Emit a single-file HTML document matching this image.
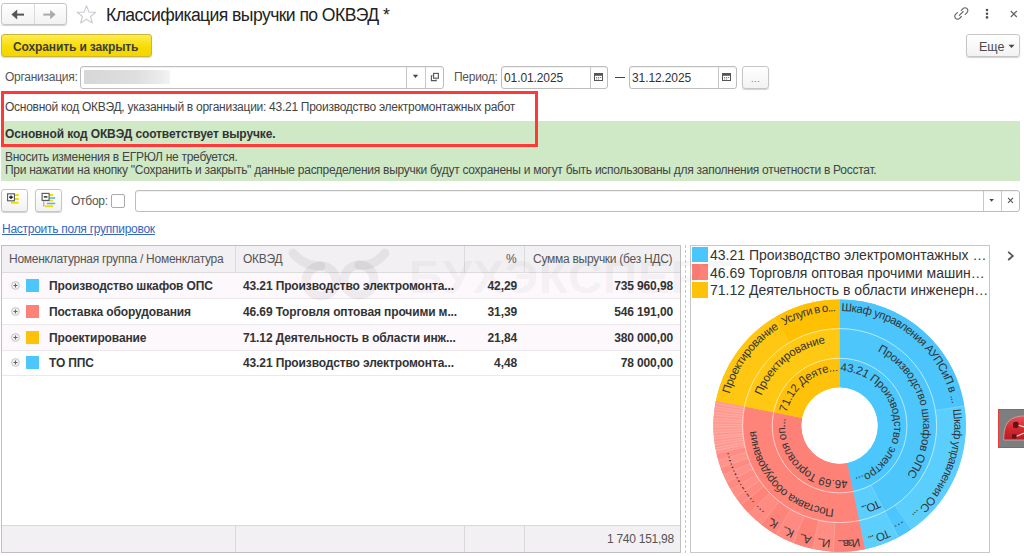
<!DOCTYPE html>
<html><head><meta charset="utf-8">
<style>
html,body{margin:0;padding:0;background:#fff;}
body{width:1024px;height:556px;overflow:hidden;position:relative;font-family:"Liberation Sans",sans-serif;font-size:12px;letter-spacing:-0.27px;color:#333;}
.a{position:absolute;white-space:nowrap;}
.t{position:absolute;white-space:nowrap;line-height:14px;height:14px;}
.btn{position:absolute;box-sizing:border-box;border:1px solid #c6c6c6;border-radius:3px;background:linear-gradient(#ffffff,#f2f2f2);box-shadow:0 1px 1px rgba(0,0,0,0.18);}
.inp{position:absolute;box-sizing:border-box;border:1px solid #bdbdbd;border-radius:3px;background:#fff;box-shadow:inset 0 1px 1px rgba(0,0,0,0.06);}
.vd{position:absolute;top:0;bottom:0;width:1px;background:#c8c8c8;}
.b{font-weight:bold;letter-spacing:-0.12px;}
.hd{color:#555;}
.cell{position:absolute;white-space:nowrap;line-height:14px;}
</style></head><body>

<!-- nav buttons -->
<div class="btn" style="left:1px;top:3px;width:66px;height:22px;">
  <div class="vd" style="left:32px;background:#dadada"></div>
</div>
<svg class="a" style="left:0;top:0" width="70" height="28">
  <path d="M11.4,14.6 L17.2,9.6 L17.2,19.6 Z" fill="#555"/>
  <rect x="16.5" y="13.6" width="7.5" height="2" fill="#555"/>
  <path d="M55.6,14.6 L50.2,10 L50.2,19.2 Z" fill="#aaa"/>
  <rect x="43.3" y="13.6" width="7.5" height="2" fill="#aaa"/>
</svg>
<!-- star -->
<svg class="a" style="left:76px;top:5px" width="21" height="19">
  <path d="M10.5,0.8 L13,7.1 L19.8,7.3 L14.5,11.5 L16.4,18 L10.5,14.2 L4.6,18 L6.5,11.5 L1.2,7.3 L8,7.1 Z" fill="none" stroke="#c9cdd2" stroke-width="1.1" stroke-linejoin="round"/>
</svg>
<div class="t" style="left:106px;top:5px;font-size:17.6px;letter-spacing:-0.58px;line-height:20px;height:20px;color:#222;">Классификация выручки по ОКВЭД *</div>

<!-- right header icons -->
<svg class="a" style="left:953px;top:6px" width="16" height="16">
  <g fill="none" stroke="#666" stroke-width="1.35" stroke-linecap="round" transform="translate(1.2,0.8) scale(0.86)">
    <path d="M8.2,4.2 L10.3,2.1 C11.6,0.8 13.6,0.8 14.9,2.1 C16.2,3.4 16.2,5.4 14.9,6.7 L12.8,8.8"/>
    <path d="M8.3,11.3 L6.2,13.4 C4.9,14.7 2.9,14.7 1.6,13.4 C0.3,12.1 0.3,10.1 1.6,8.8 L3.7,6.7"/>
    <path d="M6,10 L10.5,5.5"/>
  </g>
</svg>
<svg class="a" style="left:984px;top:8px" width="6" height="12">
  <circle cx="3" cy="2" r="1.3" fill="#555"/><circle cx="3" cy="5.7" r="1.3" fill="#555"/><circle cx="3" cy="9.4" r="1.3" fill="#555"/>
</svg>
<svg class="a" style="left:1009px;top:10px" width="9" height="9">
  <path d="M1.8,1 L7.8,7 M7.8,1 L1.8,7" stroke="#666" stroke-width="1.2"/>
</svg>

<!-- save button -->
<div class="a" style="left:1px;top:34px;width:151px;height:23px;box-sizing:border-box;border:1px solid #cdb43a;border-radius:3px;background:linear-gradient(#ffec50,#f8db00 60%,#f3d500);box-shadow:0 1px 1px rgba(0,0,0,0.15);"></div>
<div class="t b" style="left:13px;top:40px;color:#3d3d3d;">Сохранить и закрыть</div>

<!-- Еще -->
<div class="btn" style="left:966px;top:34px;width:54px;height:23px;"></div>
<div class="t" style="left:979px;top:39.5px;color:#4a4a4a;font-size:12.5px;letter-spacing:0;">Еще</div>
<svg class="a" style="left:1008px;top:44px" width="7" height="5"><path d="M0.5,0.8 H6.5 L3.5,4 Z" fill="#444"/></svg>

<!-- org row -->
<div class="t" style="left:5px;top:70px;color:#555;">Организация:</div>
<div class="inp" style="left:80px;top:66px;width:364px;height:23px;">
  <div class="vd" style="left:325px;"></div>
  <div class="vd" style="left:344px;"></div>
</div>
<div class="a" style="left:84px;top:70px;width:86px;height:14px;background:linear-gradient(90deg,#d7d7d7,#dedede 60%,#ececec 90%,#f4f4f4);"></div>
<svg class="a" style="left:412px;top:74px" width="7" height="5"><path d="M0.8,0.8 H6.2 L3.5,4 Z" fill="#444"/></svg>
<svg class="a" style="left:430px;top:72px" width="10" height="10">
  <rect x="3.6" y="1.4" width="4.8" height="4.8" fill="none" stroke="#555" stroke-width="1.1"/>
  <path d="M2.6,3.8 H1.4 V8.6 H6.2 V7.4" fill="none" stroke="#555" stroke-width="1.1"/>
</svg>
<div class="t" style="left:454px;top:70px;color:#555;">Период:</div>
<div class="inp" style="left:501px;top:66px;width:107px;height:23px;"><div class="vd" style="left:88px;"></div></div>
<div class="t" style="left:504px;top:71px;color:#333;letter-spacing:-0.1px;">01.01.2025</div>
<svg class="a" style="left:594px;top:72px" width="9" height="9"><rect x="0.5" y="1.5" width="8" height="7" fill="none" stroke="#555" stroke-width="1"/><rect x="0.5" y="1.5" width="8" height="2.3" fill="#555"/><path d="M2,5.5h1.2M4,5.5h1.2M6,5.5h1.2M2,7h1.2M4,7h1.2" stroke="#777" stroke-width="0.9"/></svg>
<div class="a" style="left:615px;top:77px;width:10px;height:1px;background:#444;"></div>
<div class="inp" style="left:629px;top:66px;width:108px;height:23px;"><div class="vd" style="left:88px;"></div></div>
<div class="t" style="left:632px;top:71px;color:#333;letter-spacing:-0.1px;">31.12.2025</div>
<svg class="a" style="left:722px;top:72px" width="9" height="9"><rect x="0.5" y="1.5" width="8" height="7" fill="none" stroke="#555" stroke-width="1"/><rect x="0.5" y="1.5" width="8" height="2.3" fill="#555"/><path d="M2,5.5h1.2M4,5.5h1.2M6,5.5h1.2M2,7h1.2M4,7h1.2" stroke="#777" stroke-width="0.9"/></svg>
<div class="btn" style="left:742px;top:66px;width:27px;height:23px;"></div>
<div class="t" style="left:751px;top:72px;color:#666;font-size:9px;letter-spacing:0.6px;">...</div>

<!-- green info -->
<div class="a" style="left:1px;top:121px;width:1019px;height:60px;background:#cfe8c6;"></div>
<div class="a" style="left:2px;top:94px;width:534px;height:27px;background:#fff;"></div>
<div class="a" style="left:0.5px;top:91px;width:537.5px;height:56px;box-sizing:border-box;border:3px solid #ff3838;"></div>
<div class="t" style="left:5px;top:100px;color:#444;">Основной код ОКВЭД, указанный в организации: 43.21 Производство электромонтажных работ</div>
<div class="t b" style="left:5px;top:127px;color:#333;">Основной код ОКВЭД соответствует выручке.</div>
<div class="t" style="left:5px;top:150px;color:#444;">Вносить изменения в ЕГРЮЛ не требуется.</div>
<div class="t" style="left:5px;top:163px;color:#444;">При нажатии на кнопку "Сохранить и закрыть" данные распределения выручки будут сохранены и могут быть использованы для заполнения отчетности в Росстат.</div>

<!-- toolbar -->
<div class="btn" style="left:1px;top:189px;width:27px;height:23px;"></div>
<svg class="a" style="left:0;top:185px" width="64" height="30">
  <path d="M15,10 H18.8 M15,14 H18.8 M11,17.8 H18.8" stroke="#f0e000" stroke-width="2.1"/>
  <rect x="7.6" y="8.8" width="6.8" height="7" fill="#fff" stroke="#555" stroke-width="1.1"/>
  <path d="M9.2,12.3 H12.8 M11,10.5 V14.1" stroke="#222" stroke-width="1.4"/>
</svg>
<div class="btn" style="left:35px;top:189px;width:27px;height:23px;"></div>
<svg class="a" style="left:0;top:185px" width="64" height="30">
  <path d="M49.4,10 H53.2 M45,15.6 H53.2 M45,21.3 H53.2" stroke="#f0e000" stroke-width="1.9"/>
  <path d="M49.4,13.1 H55.2 M46.9,18.4 H55.2" stroke="#55b0e8" stroke-width="1.5"/>
  <path d="M43.8,16 V21.5" stroke="#999" stroke-width="1"/>
  <rect x="42.1" y="8.4" width="7" height="7" fill="#fff" stroke="#555" stroke-width="1.1"/>
  <path d="M43.8,11.9 H47.4" stroke="#222" stroke-width="1.4"/>
</svg>
<div class="t" style="left:71px;top:194px;color:#555;">Отбор:</div>
<div class="a" style="left:111px;top:194px;width:14px;height:14px;box-sizing:border-box;border:1px solid #aaa;border-radius:2px;background:#fff;"></div>
<div class="inp" style="left:135px;top:190px;width:885px;height:22px;">
  <div class="vd" style="left:847px;"></div>
  <div class="vd" style="left:865px;"></div>
</div>
<svg class="a" style="left:988px;top:198px" width="7" height="5"><path d="M1.3,0.9 H5.9 L3.6,3.7 Z" fill="#444"/></svg>
<svg class="a" style="left:1007px;top:197px" width="8" height="8"><path d="M1,0.8 L6,5.8 M6,0.8 L1,5.8" stroke="#555" stroke-width="1.1"/></svg>

<div class="t" style="left:2px;top:222px;color:#3566c4;text-decoration:underline;">Настроить поля группировок</div>

<!-- table -->
<div class="a" style="left:1px;top:245px;width:680px;height:308px;box-sizing:border-box;border:1px solid #bfbfbf;background:#fff;"></div>
<div class="a" style="left:2px;top:246px;width:678px;height:26px;background:#f3f0f3;border-bottom:1px solid #dcdcdc;"></div>
<div class="a" style="left:235px;top:246px;width:1px;height:26px;background:#dcdcdc;"></div>
<div class="a" style="left:464px;top:246px;width:1px;height:26px;background:#dcdcdc;"></div>
<div class="a" style="left:524px;top:246px;width:1px;height:26px;background:#dcdcdc;"></div>

<div class="cell hd" style="left:9px;top:252px;">Номенклатурная группа / Номенклатура</div>
<div class="cell hd" style="left:243px;top:252px;">ОКВЭД</div>
<div class="cell hd" style="left:506px;top:252px;">%</div>
<div class="cell hd" style="left:533px;top:252px;">Сумма выручки (без НДС)</div>

<!-- rows -->
<div class="a" style="left:2px;top:273px;width:678px;height:25px;background:#fcf8fc;border-bottom:1px solid #ebe7eb;"></div>
<div class="a" style="left:2px;top:299px;width:678px;height:25px;background:#fff;border-bottom:1px solid #ebe7eb;"></div>
<div class="a" style="left:2px;top:325px;width:678px;height:25px;background:#fcf8fc;border-bottom:1px solid #ebe7eb;"></div>
<div class="a" style="left:2px;top:351px;width:678px;height:24px;background:#fff;border-bottom:1px solid #ebe7eb;"></div>


<svg class="a" style="left:11px;top:281px" width="9" height="9"><circle cx="4.5" cy="4.5" r="3.9" fill="#f2f2f2" stroke="#c4c4c4" stroke-width="1"/><path d="M2.5,4.5H6.5M4.5,2.5V6.5" stroke="#666" stroke-width="1.1"/></svg><div class="a" style="left:26px;top:279px;width:13px;height:13px;background:#4dc6fc;"></div><div class="cell b" style="left:49px;top:279px;">Производство шкафов ОПС</div><div class="cell b" style="left:243px;top:279px;">43.21 Производство электромонта...</div><div class="cell b" style="left:466px;top:279px;width:51px;text-align:right;">42,29</div><div class="cell b" style="left:560px;top:279px;width:113px;text-align:right;">735 960,98</div><svg class="a" style="left:11px;top:307px" width="9" height="9"><circle cx="4.5" cy="4.5" r="3.9" fill="#f2f2f2" stroke="#c4c4c4" stroke-width="1"/><path d="M2.5,4.5H6.5M4.5,2.5V6.5" stroke="#666" stroke-width="1.1"/></svg><div class="a" style="left:26px;top:305px;width:13px;height:13px;background:#fe8177;"></div><div class="cell b" style="left:49px;top:305px;">Поставка оборудования</div><div class="cell b" style="left:243px;top:305px;">46.69 Торговля оптовая прочими м...</div><div class="cell b" style="left:466px;top:305px;width:51px;text-align:right;">31,39</div><div class="cell b" style="left:560px;top:305px;width:113px;text-align:right;">546 191,00</div><svg class="a" style="left:11px;top:333px" width="9" height="9"><circle cx="4.5" cy="4.5" r="3.9" fill="#f2f2f2" stroke="#c4c4c4" stroke-width="1"/><path d="M2.5,4.5H6.5M4.5,2.5V6.5" stroke="#666" stroke-width="1.1"/></svg><div class="a" style="left:26px;top:331px;width:13px;height:13px;background:#ffc20b;"></div><div class="cell b" style="left:49px;top:331px;">Проектирование</div><div class="cell b" style="left:243px;top:331px;">71.12 Деятельность в области инж...</div><div class="cell b" style="left:466px;top:331px;width:51px;text-align:right;">21,84</div><div class="cell b" style="left:560px;top:331px;width:113px;text-align:right;">380 000,00</div><svg class="a" style="left:11px;top:358px" width="9" height="9"><circle cx="4.5" cy="4.5" r="3.9" fill="#f2f2f2" stroke="#c4c4c4" stroke-width="1"/><path d="M2.5,4.5H6.5M4.5,2.5V6.5" stroke="#666" stroke-width="1.1"/></svg><div class="a" style="left:26px;top:356px;width:13px;height:13px;background:#4dc6fc;"></div><div class="cell b" style="left:49px;top:356px;">ТО ППС</div><div class="cell b" style="left:243px;top:356px;">43.21 Производство электромонта...</div><div class="cell b" style="left:466px;top:356px;width:51px;text-align:right;">4,48</div><div class="cell b" style="left:560px;top:356px;width:113px;text-align:right;">78 000,00</div>

<!-- footer -->
<div class="a" style="left:2px;top:525px;width:678px;height:26px;background:#f3f0f3;border-top:1px solid #d8d8d8;"></div>
<div class="a" style="left:235px;top:526px;width:1px;height:26px;background:#d8d8d8;"></div>
<div class="a" style="left:464px;top:526px;width:1px;height:26px;background:#d8d8d8;"></div>
<div class="a" style="left:524px;top:526px;width:1px;height:26px;background:#d8d8d8;"></div>
<div class="cell" style="left:607px;top:532px;color:#555;width:65px;text-align:right;">1 740 151,98</div>

<!-- splitter -->
<div class="a" style="left:685px;top:245px;width:0;height:308px;border-left:1px dashed #c8c8c8;"></div>

<!-- chart panel -->
<div class="a" style="left:690px;top:245px;width:300px;height:308px;box-sizing:border-box;border:1px solid #c8c8c8;background:#fff;"></div>
<div class="a" style="left:692px;top:247px;width:16px;height:15px;background:#4bc6fd;"></div>
<div class="a" style="left:692px;top:264px;width:16px;height:16px;background:#fe8177;"></div>
<div class="a" style="left:692px;top:282px;width:16px;height:16px;background:#ffc20b;"></div>
<div class="a" style="left:710px;top:246.5px;font-size:14px;letter-spacing:0;line-height:17px;color:#333;">43.21 Производство электромонтажных …</div>
<div class="a" style="left:710px;top:264.5px;font-size:14px;letter-spacing:0;line-height:17px;color:#333;">46.69 Торговля оптовая прочими машин…</div>
<div class="a" style="left:710px;top:282px;font-size:14px;letter-spacing:0;line-height:17px;color:#333;">71.12 Деятельность в области инженерн…</div>
<svg class="a" style="left:1005px;top:250px" width="10" height="13"><path d="M3.2,1.8 L7.8,5.9 L3.2,10" fill="none" stroke="#555" stroke-width="1.8"/></svg>

<svg width="1024" height="556" style="position:absolute;left:0;top:0"><defs><clipPath id="cp"><rect x="691" y="246" width="298" height="306"/></clipPath><path id="p1" d="M840.36,371.11A54.5,54.5 0 1 1 792.79,397.69"/><path id="p2" d="M847.18,479.57A54.5,54.5 0 1 1 890.13,446.02"/><path id="p3" d="M786.72,412.42A54.5,54.5 0 1 1 801.74,464.80"/><path id="p4" d="M877.51,351.20A83.5,83.5 0 1 1 794.12,355.57"/><path id="p5" d="M878.16,499.67A83.5,83.5 0 1 1 923.02,429.24"/><path id="p6" d="M833.78,508.90A83.5,83.5 0 1 1 908.82,472.29"/><path id="p7" d="M761.65,395.68A83.5,83.5 0 1 1 774.71,478.15"/><path id="p8" d="M841.20,311.11A114.5,114.5 0 1 1 741.25,366.97"/><path id="p9" d="M952.93,409.27A114.5,114.5 0 1 1 882.12,319.29"/><path id="p10" d="M902.80,521.08A114.5,114.5 0 1 1 953.89,418.61"/><path id="p11" d="M887.99,529.37A114.5,114.5 0 1 1 953.66,435.58"/><path id="p12" d="M859.48,538.36A114.5,114.5 0 1 1 947.19,464.76"/><path id="p13" d="M830.62,539.75A114.5,114.5 0 1 1 933.96,490.45"/><path id="p14" d="M811.90,536.70A114.5,114.5 0 1 1 921.96,505.14"/><path id="p15" d="M794.86,531.00A114.5,114.5 0 1 1 908.51,517.04"/><path id="p16" d="M778.92,522.70A114.5,114.5 0 1 1 893.35,526.70"/><path id="p17" d="M764.48,512.01A114.5,114.5 0 1 1 876.88,533.86"/><path id="p18" d="M754.51,502.22A114.5,114.5 0 1 1 863.41,537.60"/><path id="p19" d="M748.76,495.30A114.5,114.5 0 1 1 854.55,539.12"/><path id="p20" d="M743.90,488.46A114.5,114.5 0 1 1 846.19,539.91"/><path id="p21" d="M739.94,481.98A114.5,114.5 0 1 1 838.60,540.10"/><path id="p22" d="M736.43,475.25A114.5,114.5 0 1 1 831.01,539.78"/><path id="p23" d="M733.44,468.49A114.5,114.5 0 1 1 823.66,538.99"/><path id="p24" d="M731.02,461.93A114.5,114.5 0 1 1 816.77,537.80"/><path id="p25" d="M729.54,394.04A114.5,114.5 0 1 1 757.24,505.14"/><path id="p26" d="M784.09,325.46A114.5,114.5 0 1 1 725.12,423.60"/></defs><g clip-path="url(#cp)"><path d="M839.60,299.40A126.2,126.2 0 0 1 865.04,549.21L847.28,462.92A38.1,38.1 0 0 0 839.60,387.50Z" fill="#4dc7fc"/><path d="M865.04,549.21A126.2,126.2 0 0 1 715.88,400.72L802.25,418.09A38.1,38.1 0 0 0 847.28,462.92Z" fill="#fe8379"/><path d="M715.88,400.72A126.2,126.2 0 0 1 839.60,299.40L839.60,387.50A38.1,38.1 0 0 0 802.25,418.09Z" fill="#ffc40e"/><path d="M839.60,358.30A67.3,67.3 0 0 1 853.17,491.52L847.28,462.92A38.1,38.1 0 0 0 839.60,387.50Z" fill="#4bc7fd"/><path d="M853.17,491.52A67.3,67.3 0 0 1 773.62,412.33L802.25,418.09A38.1,38.1 0 0 0 847.28,462.92Z" fill="#fe8177"/><path d="M773.62,412.33A67.3,67.3 0 0 1 839.60,358.30L839.60,387.50A38.1,38.1 0 0 0 802.25,418.09Z" fill="#ffc20b"/><path d="M839.60,328.60A97.0,97.0 0 0 1 884.78,511.44L870.95,485.15A67.3,67.3 0 0 0 839.60,358.30Z" fill="#4dc6fc"/><path d="M884.78,511.44A97.0,97.0 0 0 1 859.15,520.61L853.17,491.52A67.3,67.3 0 0 0 870.95,485.15Z" fill="#5ccefd"/><path d="M859.15,520.61A97.0,97.0 0 0 1 744.50,406.48L773.62,412.33A67.3,67.3 0 0 0 853.17,491.52Z" fill="#fe8479"/><path d="M744.50,406.48A97.0,97.0 0 0 1 839.60,328.60L839.60,358.30A67.3,67.3 0 0 0 773.62,412.33Z" fill="#ffc812"/><path d="M839.60,299.40A126.2,126.2 0 0 1 964.25,405.86L935.41,410.43A97.0,97.0 0 0 0 839.60,328.60Z" fill="#4bc5fc"/><path d="M964.25,405.86A126.2,126.2 0 0 1 911.44,529.35L894.82,505.35A97.0,97.0 0 0 0 935.41,410.43Z" fill="#5acffd"/><path d="M911.44,529.35A126.2,126.2 0 0 1 898.38,537.28L884.78,511.44A97.0,97.0 0 0 0 894.82,505.35Z" fill="#4cc6fc"/><path d="M898.38,537.28A126.2,126.2 0 0 1 865.04,549.21L859.15,520.61A97.0,97.0 0 0 0 884.78,511.44Z" fill="#5dcffd"/><path d="M865.04,549.21A126.2,126.2 0 0 1 833.44,551.65L834.86,522.48A97.0,97.0 0 0 0 859.15,520.61Z" fill="#fe837a"/><path d="M833.44,551.65A126.2,126.2 0 0 1 812.50,548.86L818.77,520.34A97.0,97.0 0 0 0 834.86,522.48Z" fill="#fe8d84"/><path d="M812.50,548.86A126.2,126.2 0 0 1 793.35,543.02L804.05,515.85A97.0,97.0 0 0 0 818.77,520.34Z" fill="#fe8278"/><path d="M793.35,543.02A126.2,126.2 0 0 1 775.93,534.56L790.66,509.35A97.0,97.0 0 0 0 804.05,515.85Z" fill="#fe8a81"/><path d="M775.93,534.56A126.2,126.2 0 0 1 761.04,524.37L779.22,501.51A97.0,97.0 0 0 0 790.66,509.35Z" fill="#fe8379"/><path d="M761.04,524.37A126.2,126.2 0 0 1 748.82,513.27L769.82,492.98A97.0,97.0 0 0 0 779.22,501.51Z" fill="#fe8c83"/><path d="M748.82,513.27A126.2,126.2 0 0 1 741.11,504.51L763.90,486.25A97.0,97.0 0 0 0 769.82,492.98Z" fill="#fe8379"/><path d="M741.11,504.51A126.2,126.2 0 0 1 735.60,497.08L759.66,480.54A97.0,97.0 0 0 0 763.90,486.25Z" fill="#fe8a81"/><path d="M735.60,497.08A126.2,126.2 0 0 1 730.86,489.65L756.02,474.83A97.0,97.0 0 0 0 759.66,480.54Z" fill="#fe8e86"/><path d="M730.86,489.65A126.2,126.2 0 0 1 726.86,482.30L752.94,469.18A97.0,97.0 0 0 0 756.02,474.83Z" fill="#fe8a81"/><path d="M726.86,482.30A126.2,126.2 0 0 1 723.43,474.91L750.31,463.50A97.0,97.0 0 0 0 752.94,469.18Z" fill="#fe9189"/><path d="M723.43,474.91A126.2,126.2 0 0 1 720.64,467.73L748.16,457.98A97.0,97.0 0 0 0 750.31,463.50Z" fill="#fe8b82"/><path d="M720.64,467.73A126.2,126.2 0 0 1 718.29,460.39L746.36,452.34A97.0,97.0 0 0 0 748.16,457.98Z" fill="#fe948b"/><path d="M718.29,460.39A126.2,126.2 0 0 1 716.54,453.56L745.01,447.09A97.0,97.0 0 0 0 746.36,452.34Z" fill="#fe8d85"/><path d="M716.54,453.56A126.2,126.2 0 0 1 715.91,450.67L744.53,444.87A97.0,97.0 0 0 0 745.01,447.09Z" fill="#ff968d"/><path d="M715.91,450.67A126.2,126.2 0 0 1 715.36,447.76L744.11,442.63A97.0,97.0 0 0 0 744.53,444.87Z" fill="#fe9c94"/><path d="M715.36,447.76A126.2,126.2 0 0 1 714.88,444.85L743.73,440.39A97.0,97.0 0 0 0 744.11,442.63Z" fill="#ff968d"/><path d="M714.88,444.85A126.2,126.2 0 0 1 714.46,441.92L743.41,438.14A97.0,97.0 0 0 0 743.73,440.39Z" fill="#fe9c94"/><path d="M714.46,441.92A126.2,126.2 0 0 1 714.11,438.98L743.15,435.88A97.0,97.0 0 0 0 743.41,438.14Z" fill="#ff968d"/><path d="M714.11,438.98A126.2,126.2 0 0 1 713.83,436.04L742.93,433.62A97.0,97.0 0 0 0 743.15,435.88Z" fill="#fe9c94"/><path d="M713.83,436.04A126.2,126.2 0 0 1 713.62,433.09L742.77,431.35A97.0,97.0 0 0 0 742.93,433.62Z" fill="#ff968d"/><path d="M713.62,433.09A126.2,126.2 0 0 1 713.48,430.13L742.66,429.08A97.0,97.0 0 0 0 742.77,431.35Z" fill="#fe9c94"/><path d="M713.48,430.13A126.2,126.2 0 0 1 713.41,427.17L742.61,426.81A97.0,97.0 0 0 0 742.66,429.08Z" fill="#ff968d"/><path d="M713.41,427.17A126.2,126.2 0 0 1 713.41,424.22L742.61,424.54A97.0,97.0 0 0 0 742.61,426.81Z" fill="#fe9c94"/><path d="M713.41,424.22A126.2,126.2 0 0 1 713.47,421.26L742.66,422.26A97.0,97.0 0 0 0 742.61,424.54Z" fill="#ff968d"/><path d="M713.47,421.26A126.2,126.2 0 0 1 713.61,418.31L742.76,419.99A97.0,97.0 0 0 0 742.66,422.26Z" fill="#fe9c94"/><path d="M713.61,418.31A126.2,126.2 0 0 1 713.82,415.36L742.92,417.73A97.0,97.0 0 0 0 742.76,419.99Z" fill="#ff968d"/><path d="M713.82,415.36A126.2,126.2 0 0 1 714.09,412.41L743.13,415.46A97.0,97.0 0 0 0 742.92,417.73Z" fill="#fe9c94"/><path d="M714.09,412.41A126.2,126.2 0 0 1 714.43,409.47L743.40,413.20A97.0,97.0 0 0 0 743.13,415.46Z" fill="#ff968d"/><path d="M714.43,409.47A126.2,126.2 0 0 1 714.85,406.54L743.71,410.95A97.0,97.0 0 0 0 743.40,413.20Z" fill="#fe9c94"/><path d="M714.85,406.54A126.2,126.2 0 0 1 715.33,403.63L744.08,408.71A97.0,97.0 0 0 0 743.71,410.95Z" fill="#ff968d"/><path d="M715.33,403.63A126.2,126.2 0 0 1 715.88,400.72L744.50,406.48A97.0,97.0 0 0 0 744.08,408.71Z" fill="#fe9c94"/><path d="M715.88,400.72A126.2,126.2 0 0 1 774.98,317.20L789.93,342.28A97.0,97.0 0 0 0 744.50,406.48Z" fill="#ffc612"/><path d="M774.98,317.20A126.2,126.2 0 0 1 839.60,299.40L839.60,328.60A97.0,97.0 0 0 0 789.93,342.28Z" fill="#ffc002"/><circle cx="839.6" cy="425.6" r="67.3" fill="none" stroke="#ffffff" stroke-opacity="0.6" stroke-width="1"/><circle cx="839.6" cy="425.6" r="97.0" fill="none" stroke="#ffffff" stroke-opacity="0.6" stroke-width="1"/><line x1="935.41" y1="410.43" x2="964.25" y2="405.86" stroke="#fff" stroke-opacity="0.18" stroke-width="1"/><line x1="894.82" y1="505.35" x2="911.44" y2="529.35" stroke="#fff" stroke-opacity="0.18" stroke-width="1"/><line x1="884.78" y1="511.44" x2="898.38" y2="537.28" stroke="#fff" stroke-opacity="0.18" stroke-width="1"/><line x1="834.86" y1="522.48" x2="833.44" y2="551.65" stroke="#fff" stroke-opacity="0.18" stroke-width="1"/><line x1="818.77" y1="520.34" x2="812.50" y2="548.86" stroke="#fff" stroke-opacity="0.18" stroke-width="1"/><line x1="804.05" y1="515.85" x2="793.35" y2="543.02" stroke="#fff" stroke-opacity="0.18" stroke-width="1"/><line x1="790.66" y1="509.35" x2="775.93" y2="534.56" stroke="#fff" stroke-opacity="0.18" stroke-width="1"/><line x1="779.22" y1="501.51" x2="761.04" y2="524.37" stroke="#fff" stroke-opacity="0.18" stroke-width="1"/><line x1="769.82" y1="492.98" x2="748.82" y2="513.27" stroke="#fff" stroke-opacity="0.18" stroke-width="1"/><line x1="763.90" y1="486.25" x2="741.11" y2="504.51" stroke="#fff" stroke-opacity="0.18" stroke-width="1"/><line x1="759.66" y1="480.54" x2="735.60" y2="497.08" stroke="#fff" stroke-opacity="0.18" stroke-width="1"/><line x1="756.02" y1="474.83" x2="730.86" y2="489.65" stroke="#fff" stroke-opacity="0.18" stroke-width="1"/><line x1="752.94" y1="469.18" x2="726.86" y2="482.30" stroke="#fff" stroke-opacity="0.18" stroke-width="1"/><line x1="750.31" y1="463.50" x2="723.43" y2="474.91" stroke="#fff" stroke-opacity="0.18" stroke-width="1"/><line x1="748.16" y1="457.98" x2="720.64" y2="467.73" stroke="#fff" stroke-opacity="0.18" stroke-width="1"/><line x1="746.36" y1="452.34" x2="718.29" y2="460.39" stroke="#fff" stroke-opacity="0.18" stroke-width="1"/><line x1="745.01" y1="447.09" x2="716.54" y2="453.56" stroke="#fff" stroke-opacity="0.18" stroke-width="1"/><line x1="744.53" y1="444.87" x2="715.91" y2="450.67" stroke="#fff" stroke-opacity="0.22" stroke-width="1"/><line x1="744.11" y1="442.63" x2="715.36" y2="447.76" stroke="#fff" stroke-opacity="0.22" stroke-width="1"/><line x1="743.73" y1="440.39" x2="714.88" y2="444.85" stroke="#fff" stroke-opacity="0.22" stroke-width="1"/><line x1="743.41" y1="438.14" x2="714.46" y2="441.92" stroke="#fff" stroke-opacity="0.22" stroke-width="1"/><line x1="743.15" y1="435.88" x2="714.11" y2="438.98" stroke="#fff" stroke-opacity="0.22" stroke-width="1"/><line x1="742.93" y1="433.62" x2="713.83" y2="436.04" stroke="#fff" stroke-opacity="0.22" stroke-width="1"/><line x1="742.77" y1="431.35" x2="713.62" y2="433.09" stroke="#fff" stroke-opacity="0.22" stroke-width="1"/><line x1="742.66" y1="429.08" x2="713.48" y2="430.13" stroke="#fff" stroke-opacity="0.22" stroke-width="1"/><line x1="742.61" y1="426.81" x2="713.41" y2="427.17" stroke="#fff" stroke-opacity="0.22" stroke-width="1"/><line x1="742.61" y1="424.54" x2="713.41" y2="424.22" stroke="#fff" stroke-opacity="0.22" stroke-width="1"/><line x1="742.66" y1="422.26" x2="713.47" y2="421.26" stroke="#fff" stroke-opacity="0.22" stroke-width="1"/><line x1="742.76" y1="419.99" x2="713.61" y2="418.31" stroke="#fff" stroke-opacity="0.22" stroke-width="1"/><line x1="742.92" y1="417.73" x2="713.82" y2="415.36" stroke="#fff" stroke-opacity="0.22" stroke-width="1"/><line x1="743.13" y1="415.46" x2="714.09" y2="412.41" stroke="#fff" stroke-opacity="0.22" stroke-width="1"/><line x1="743.40" y1="413.20" x2="714.43" y2="409.47" stroke="#fff" stroke-opacity="0.22" stroke-width="1"/><line x1="743.71" y1="410.95" x2="714.85" y2="406.54" stroke="#fff" stroke-opacity="0.22" stroke-width="1"/><line x1="744.08" y1="408.71" x2="715.33" y2="403.63" stroke="#fff" stroke-opacity="0.22" stroke-width="1"/><line x1="870.95" y1="485.15" x2="884.78" y2="511.44" stroke="#fff" stroke-opacity="0.18" stroke-width="1"/><circle cx="839.6" cy="425.6" r="38.1" fill="#fff"/><g fill="#333" font-family="Liberation Sans"><text font-size="11.5"><textPath href="#p1" textLength="154.3" lengthAdjust="spacing">43.21 Производство электро...</textPath></text><text font-size="11.5"><textPath href="#p2" textLength="99.9" lengthAdjust="spacing">46.69 Торговля оп...</textPath></text><text font-size="11.5"><textPath href="#p3" textLength="70.4" lengthAdjust="spacing">71.12 Деяте...</textPath></text><text font-size="11.5"><textPath href="#p4" textLength="144.3" lengthAdjust="spacing">Производство шкафов ОПС</textPath></text><text font-size="11.5"><textPath href="#p5" textLength="18.9" lengthAdjust="spacing">ТО...</textPath></text><text font-size="11.5"><textPath href="#p6" textLength="119.5" lengthAdjust="spacing">Поставка оборудования</textPath></text><text font-size="11.5"><textPath href="#p7" textLength="86.0" lengthAdjust="spacing">Проектирование</textPath></text><text font-size="11.5"><textPath href="#p8" textLength="156.3" lengthAdjust="spacing">Шкаф управления АУПСиП в ...</textPath></text><text font-size="11.5"><textPath href="#p9" textLength="118.3" lengthAdjust="spacing">Шкаф управления ОС ...</textPath></text><text font-size="11.5" letter-spacing="0.4"><textPath href="#p10">...</textPath></text><text font-size="11.5"><textPath href="#p11" textLength="22.0" lengthAdjust="spacing">ТО ...</textPath></text><text font-size="11.5"><textPath href="#p12" textLength="22.0" lengthAdjust="spacing">Изв...</textPath></text><text font-size="11.5"><textPath href="#p13" textLength="13.0" lengthAdjust="spacing">И...</textPath></text><text font-size="11.5"><textPath href="#p14" textLength="12.0" lengthAdjust="spacing">А...</textPath></text><text font-size="11.5"><textPath href="#p15" textLength="12.0" lengthAdjust="spacing">К...</textPath></text><text font-size="11.5"><textPath href="#p16" textLength="10.0" lengthAdjust="spacing">К...</textPath></text><text font-size="11.5" letter-spacing="0.4"><textPath href="#p17">...</textPath></text><text font-size="11.5" letter-spacing="0.4"><textPath href="#p18">...</textPath></text><text font-size="11.5" letter-spacing="0.4"><textPath href="#p19">...</textPath></text><text font-size="11.5" letter-spacing="0.4"><textPath href="#p20">...</textPath></text><text font-size="11.5" letter-spacing="0.4"><textPath href="#p21">...</textPath></text><text font-size="11.5" letter-spacing="0.4"><textPath href="#p22">...</textPath></text><text font-size="11.5" letter-spacing="0.4"><textPath href="#p23">...</textPath></text><text font-size="11.5" letter-spacing="0.4"><textPath href="#p24">...</textPath></text><text font-size="11.5"><textPath href="#p25" textLength="83.9" lengthAdjust="spacing">Проектирование</textPath></text><text font-size="11.5"><textPath href="#p26" textLength="54.0" lengthAdjust="spacing">Услуги в о...</textPath></text></g></g></svg>

<!-- watermark -->
<svg class="a" style="left:0;top:0" width="1024" height="556">
  <g fill="none" stroke="#000" stroke-opacity="0.055" stroke-width="9" stroke-linecap="round">
    <circle cx="321" cy="281" r="15"/>
    <circle cx="359" cy="280" r="15"/>
    <path d="M293,253 C300,262 310,266 321,266"/>
    <path d="M385,253 C378,262 370,266 359,265"/>
  </g>
  <text x="409" y="293" font-family="Liberation Sans" font-weight="bold" font-size="47" textLength="322" lengthAdjust="spacing" fill="#000" fill-opacity="0.055">БУХЭКСПЕРТ</text>
</svg>
<!-- red logo -->
<div class="a" style="left:998px;top:409px;width:30px;height:39px;box-sizing:border-box;border:1px solid #f03a3a;background:#7d7e80;overflow:hidden;">
  <svg width="30" height="39" style="position:absolute;left:-1px;top:-1px">
    <defs><linearGradient id="rg" x1="0" y1="0" x2="0" y2="1"><stop offset="0" stop-color="#e8555a"/><stop offset="0.5" stop-color="#d42a2f"/><stop offset="1" stop-color="#b81c22"/></linearGradient></defs>
    <path d="M5.8,31 C5.6,23 7,16 11,12 C14,9 18,7.5 24,7 L31,7 L31,31 Z" fill="url(#rg)" stroke="#c9a3a5" stroke-width="0.9"/>
    <rect x="15" y="12.8" width="5.6" height="6.2" rx="1.8" fill="#5e1418"/>
    <rect x="14" y="25.2" width="4.6" height="4.4" rx="1" fill="#5e1418"/>
    <path d="M20.6,16.2 L31,19.5 M18.6,27.2 L31,22" stroke="#f2d6d6" stroke-width="1.1"/>
  </svg>
</div>
</body></html>
